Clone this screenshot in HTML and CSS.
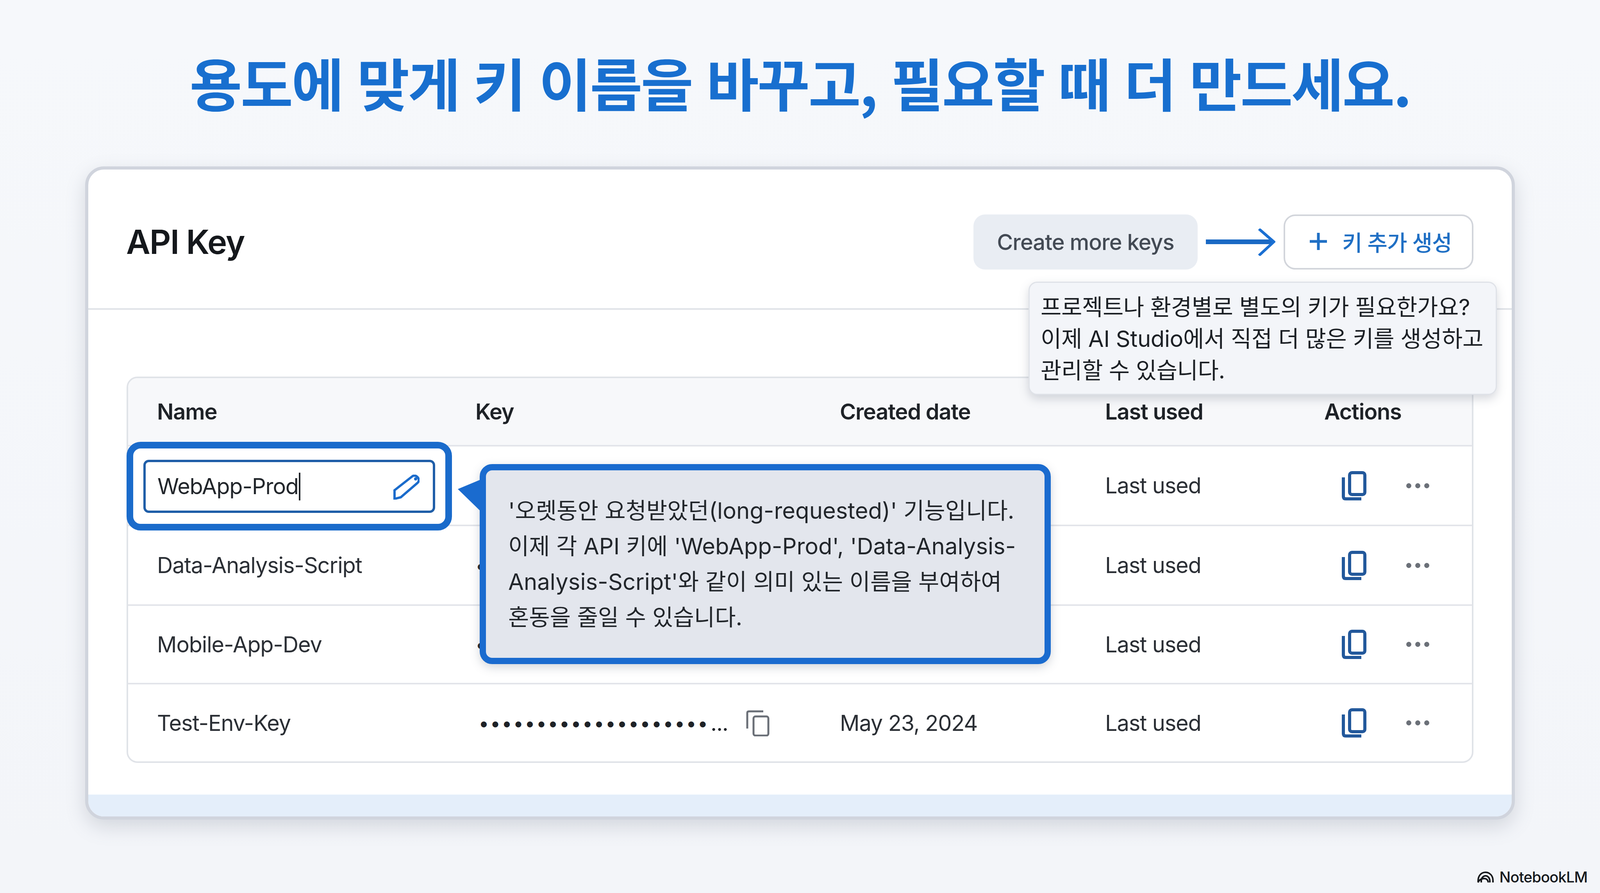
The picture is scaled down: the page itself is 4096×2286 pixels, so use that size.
FILE: index.html
```html
<!DOCTYPE html>
<html lang="ko">
<head>
<meta charset="utf-8">
<title>API Key</title>
<link rel="stylesheet" href="styles.css">
</head>
<body>
<main class="slide">
  <h1 class="title">용도에 맞게 키 이름을 바꾸고, 필요할 때 더 만드세요.</h1>
  <section class="card">
    <header class="card-head">
      <h2 class="card-title">API Key</h2>
      <div class="head-actions">
        <span class="label-btn">Create more keys</span>
        <svg class="arrow" viewBox="0 0 178 70"><path d="M0 34H170" class="arrow-line"/><path d="M136 1L174 34L136 69" class="arrow-head"/></svg>
        <button class="add-btn"><svg class="plus" viewBox="0 0 48 48"><path d="M24 2V46M2 24H46"/></svg><span>키 추가 생성</span></button>
      </div>
    </header>
    <div class="tip">프로젝트나 환경별로 별도의 키가 필요한가요?<br>이제 AI Studio에서 직접 더 많은 키를 생성하고<br>관리할 수 있습니다.</div>
    <div class="table">
      <div class="row row-head">
        <div>Name</div><div>Key</div><div>Created date</div><div>Last used</div><div>Actions</div>
      </div>
      <div class="row">
        <div></div><div></div><div></div><div>Last used</div>
        <div class="acts"><svg class="copy" viewBox="0 0 63 75"><rect x="20" y="4" width="39" height="56" rx="6"/><path d="M4 16V65Q4 71 10 71H50"/></svg><span class="more"><i></i><i></i><i></i></span></div>
      </div>
      <div class="row">
        <div>Data-Analysis-Script</div><div class="mask">•</div><div></div><div>Last used</div>
        <div class="acts"><svg class="copy" viewBox="0 0 63 75"><rect x="20" y="4" width="39" height="56" rx="6"/><path d="M4 16V65Q4 71 10 71H50"/></svg><span class="more"><i></i><i></i><i></i></span></div>
      </div>
      <div class="row">
        <div>Mobile-App-Dev</div><div class="mask">•</div><div></div><div>Last used</div>
        <div class="acts"><svg class="copy" viewBox="0 0 63 75"><rect x="20" y="4" width="39" height="56" rx="6"/><path d="M4 16V65Q4 71 10 71H50"/></svg><span class="more"><i></i><i></i><i></i></span></div>
      </div>
      <div class="row">
        <div>Test-Env-Key</div>
        <div class="key-cell"><span class="mask">••••••••••••••••••••</span><span class="ellipsis">...</span><svg class="copy-grey" viewBox="0 0 60 68"><rect x="19" y="17" width="38" height="49" rx="5"/><path d="M3 48V8Q3 4 7 4H44"/></svg></div>
        <div>May 23, 2024</div><div>Last used</div>
        <div class="acts"><svg class="copy" viewBox="0 0 63 75"><rect x="20" y="4" width="39" height="56" rx="6"/><path d="M4 16V65Q4 71 10 71H50"/></svg><span class="more"><i></i><i></i><i></i></span></div>
      </div>
      <div class="focus">
        <div class="input"><span class="input-text">WebApp-Prod</span><span class="caret"></span>
          <svg class="pencil" viewBox="0 0 68 64"><path d="M4 40L50 4Q54 1 60 4Q67 9 66 15Q66 18 63 21L20 58L4 62Z"/><circle class="pencil-tip" cx="58" cy="11" r="4"/></svg>
        </div>
      </div>
      <div class="callout">'오렛동안 요청받았던(long-requested)' 기능입니다.<br>이제 각 API 키에 'WebApp-Prod', 'Data-Analysis-<br>Analysis-Script'와 같이 의미 있는 이름을 부여하여<br>혼동을 줄일 수 있습니다.</div>
    </div>
    <div class="strip"></div>
  </section>
  <footer class="brand">
    <svg class="brand-mark" viewBox="0 0 42 30"><path d="M2 29V24C2 12 10 3 21 3S40 12 40 24V29M10 29V25C10 18 15 12 21 12S32 18 32 25V29M2 29C5 21 12 19 18 19S27 23 28 29"/></svg>
    <span>NotebookLM</span>
  </footer>
</main>
</body>
</html>
```
FILE: styles.css
```css
* { box-sizing: border-box; }
html, body { margin: 0; height: 100%; }
body {
  overflow: hidden;
  background: linear-gradient(180deg, #f6f8fb 0%, #f3f5f9 100%);
  font-family: Inter, "Noto Sans CJK KR", sans-serif;
  color: #22262b;
}
.slide { position: relative; width: 4096px; height: 2286px; }
.title {
  margin: 0;
  height: 426px;
  padding-top: 108px;
  line-height: 202px;
  text-align: center;
  font-size: 146px;
  letter-spacing: -3.8px;
  font-weight: 700;
  color: #186fcf;
  font-family: "Noto Sans CJK KR", sans-serif;
  white-space: nowrap;
}
.card {
  position: relative;
  margin-left: 218px;
  width: 3660px;
  height: 1672px;
  background: #fff;
  border: 8px solid #d0d4dd;
  border-radius: 48px;
  box-shadow: 0 18px 50px rgba(95, 105, 125, .22);
}
.card-head {
  height: 359px;
  border-bottom: 4px solid #e0e3e8;
  padding: 115px 98px 0 97px;
  display: flex;
  justify-content: space-between;
  align-items: flex-start;
}
.card-title { margin: 0; font-size: 85px; letter-spacing: -2px; line-height: 141px; font-weight: 600; color: #15181c; }
.head-actions { display: flex; align-items: center; height: 141px; }
.label-btn {
  width: 574px; height: 141px;
  display: flex; align-items: center; justify-content: center;
  background: #e9edf3;
  border-radius: 30px;
  font-size: 56px;
  letter-spacing: -1px;
  font-weight: 500;
  color: #434a54;
}
.arrow { width: 178px; height: 70px; margin: 0 21px; }
.arrow-line { stroke: #1a69c4; stroke-width: 12; fill: none; }
.arrow-head { stroke: #1a6fd2; stroke-width: 7; fill: none; }
.add-btn {
  width: 486px; height: 141px;
  display: flex; align-items: center; gap: 37px;
  padding: 0 0 4px 61px;
  background: #fff;
  border: 4px solid #d2d5db;
  border-radius: 30px;
  font-family: inherit;
  font-size: 56px;
  letter-spacing: -1px;
  font-weight: 500;
  color: #1f6fc4;
}
.plus { width: 48px; height: 48px; flex: none; }
.plus path { stroke: #1f6fc4; stroke-width: 7; fill: none; }
.tip {
  position: absolute;
  z-index: 3;
  left: 2407px;
  top: 287px;
  width: 1199px;
  height: 290px;
  padding: 22px 0 0 28px;
  background: #f3f5f9;
  border: 3px solid #dfe2e8;
  border-radius: 22px;
  box-shadow: 0 10px 24px rgba(90, 100, 120, .25);
  font-size: 58px;
  letter-spacing: -.4px;
  line-height: 81px;
  color: #1c2025;
  white-space: nowrap;
}
.table {
  position: relative;
  display: grid;
  grid-template-rows: 171px 204px 204px 201px 1fr;
  margin: 171px 98px 0 98px;
  height: 989px;
  border: 4px solid #e0e3e8;
  border-radius: 28px;
  background: #fff;
}
.row {
  display: grid;
  grid-template-columns: 889px 933px 679px 561px 1fr;
  align-items: center;
  border-top: 4px solid #e3e5ea;
  font-size: 56px;
  letter-spacing: -1.2px;
  color: #2b2f35;
  white-space: nowrap;
}
.row > div:first-child { padding-left: 74px; }
.row-head {
  border-top: 0;
  background: #f7f8fa;
  border-radius: 24px 24px 0 0;
  font-weight: 600;
  color: #1e2227;
}
.acts { display: flex; align-items: center; padding-left: 45px; gap: 102px; }
.copy { width: 63px; height: 75px; flex: none; }
.copy rect, .copy path { fill: none; stroke: #22589b; stroke-width: 8; }
.more { display: flex; gap: 10px; }
.more i { width: 13px; height: 13px; border-radius: 50%; background: #6b7078; display: block; }
.mask { font-size: 48px; letter-spacing: 2.5px; color: #1e2227; }
.key-cell { display: flex; align-items: center; padding-left: 8px; }
.ellipsis { font-size: 56px; margin-left: 4px; color: #1e2227; }
.copy-grey { width: 60px; height: 68px; flex: none; margin-left: 46px; }
.copy-grey rect, .copy-grey path { fill: none; stroke: #6a6f77; stroke-width: 5; }
.focus {
  position: absolute;
  z-index: 2;
  left: -4px; top: 163px;
  width: 833px; height: 227px;
  border: 17px solid #1a6bcb;
  border-radius: 36px;
  background: #fff;
  padding: 29px 26px;
}
.input {
  position: relative;
  height: 136px;
  display: flex;
  align-items: center;
  padding-left: 30px;
  border: 6px solid #1f5ea8;
  border-radius: 14px;
  font-size: 56px;
  letter-spacing: -1.2px;
  color: #22262b;
}
.caret { width: 4px; height: 71px; background: #22262b; margin-left: 1px; }
.pencil { position: absolute; right: 34px; top: 32px; width: 68px; height: 64px; }
.pencil path { fill: none; stroke: #1a6bcb; stroke-width: 6; }
.pencil .pencil-tip { fill: #1a6bcb; }
.callout {
  position: absolute;
  z-index: 2;
  left: 900px; top: 220px;
  width: 1462px; height: 512px;
  padding: 58px 0 0 57px;
  background: #e3e6ed;
  border: 16px solid #1a6bcf;
  border-radius: 32px;
  box-shadow: 0 8px 24px rgba(80, 90, 110, .25);
  font-size: 58px;
  line-height: 91px;
  color: #22262b;
  white-space: nowrap;
}
.callout::before {
  content: "";
  position: absolute;
  left: -72px; top: 18px;
  width: 72px; height: 100px;
  background: #1a6bcf;
  clip-path: polygon(0 30%, 100% 0, 100% 100%);
}
.strip {
  position: absolute;
  left: 0; right: 0; bottom: 0;
  height: 56px;
  background: #e4eefa;
  border-radius: 0 0 40px 40px;
}
.brand {
  position: absolute;
  right: 32px; top: 2222px;
  display: flex; align-items: center; gap: 15px;
  font-size: 38px;
  letter-spacing: -.8px;
  font-weight: 500;
  color: #15181c;
}
.brand-mark { width: 42px; height: 30px; }
.brand-mark path { fill: none; stroke: #15181c; stroke-width: 4; }
```
